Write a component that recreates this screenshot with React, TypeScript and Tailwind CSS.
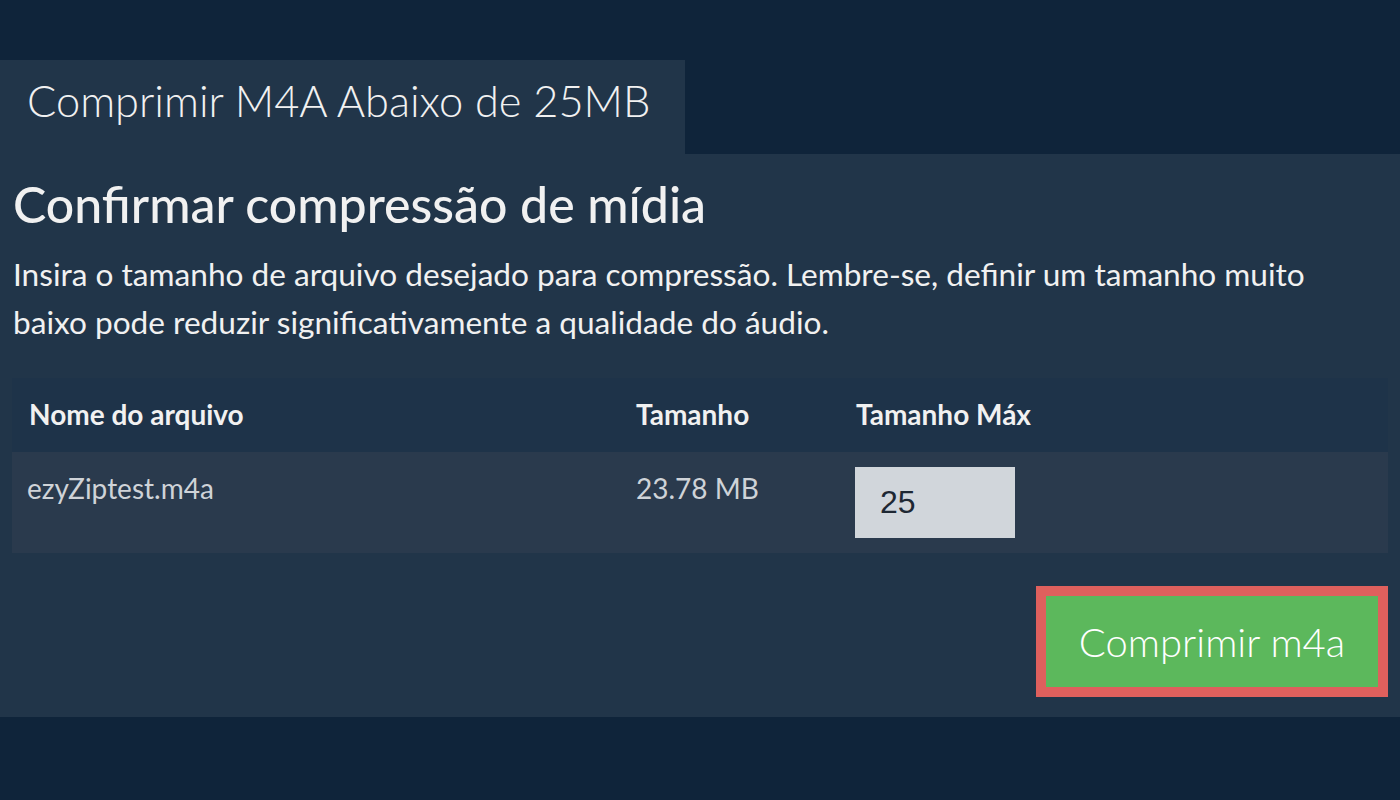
export default function App() {
  return (
    <div
      className="min-h-[800px] w-full bg-[#0f243a] pt-[60px] text-[#f1f1f1]"
      style={{ fontFamily: 'Lato, "Open Sans", sans-serif' }}
    >
      {/* Tab */}
      <div className="h-[94px] w-[685px] bg-[#213549] pl-[27px] pt-[14px]">
        <h1 className="text-[43.4px] font-light leading-[1.2] text-[#f1f1f1]">
          Comprimir M4A Abaixo de 25MB
        </h1>
      </div>

      {/* Panel */}
      <div className="h-[563px] bg-[#213549] px-[12px] pt-[20px]">
        <h2 className="pl-[1px] text-[50px] font-medium leading-[60px] text-[#f1f1f1]">
          Confirmar compressão de mídia
        </h2>
        <p className="mt-[16px] pl-[1px] text-[31.6px] leading-[48px] text-[#f1f1f1]">
          Insira o tamanho de arquivo desejado para compressão. Lembre-se, definir um tamanho muito
          <br />
          baixo pode reduzir significativamente a qualidade do áudio.
        </p>

        {/* Table */}
        <div className="mt-[32px] w-[1376px]">
          <div className="flex h-[74px] items-center bg-[#1e3349] text-[28px] font-bold leading-[1.2] text-[#f1f1f1]">
            <div className="w-[607px] pl-[17px]">Nome do arquivo</div>
            <div className="w-[220px] pl-[17px]">Tamanho</div>
            <div className="pl-[17px]">Tamanho Máx</div>
          </div>
          <div className="flex h-[101px] bg-[#2a3a4d] text-[28px] leading-[1.2] text-[#cfd3d8]">
            <div className="w-[607px] pl-[15px] pt-[20px]">ezyZiptest.m4a</div>
            <div className="w-[220px] pl-[17px] pt-[20px]">23.78 MB</div>
            <div className="pl-[16px] pt-[15px]">
              <input
                defaultValue="25"
                className="h-[71px] w-[160px] bg-[#d1d6db] pl-[25px] text-[32px] text-[#1e2833] outline-none"
                style={{ fontFamily: '"Liberation Sans", Arial, sans-serif' }}
              />
            </div>
          </div>
        </div>

        {/* Action */}
        <div className="mt-[33px] flex w-[1376px] justify-end">
          <button className="h-[111px] w-[352px] border-[10px] border-[#df605d] bg-[#5cb85c] text-[40px] font-light text-white">
            Comprimir m4a
          </button>
        </div>
      </div>
    </div>
  );
}
